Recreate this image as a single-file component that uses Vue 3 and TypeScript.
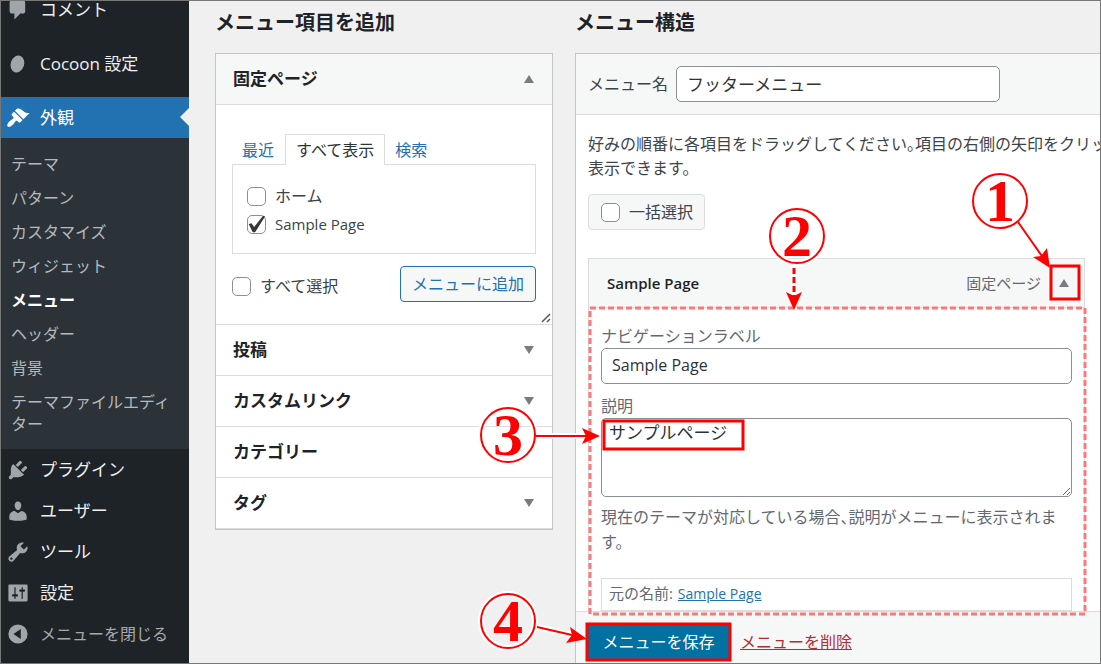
<script setup lang="ts">
import { ref } from 'vue'

interface MenuIcon {
  label: string
  path: string
}

const topItem: MenuIcon = {
  label: 'コメント',
  path: 'M5 2h9q.82 0 1.41.59T16 4v7q0 .82-.59 1.41T14 13h-2l-5 5v-5H5q-.82 0-1.41-.59T3 11V4q0-.82.59-1.41T5 2z',
}

const appearancePath =
  'M14.48 11.06L7.41 3.99l1.5-1.5c.5-.56 2.3-.47 3.51.32 1.21.8 1.43 1.28 2.91 2.1 1.18.64 2.45 1.26 4.45.85zm-.71.71L6.7 4.7 4.93 6.47c-.39.39-.39 1.02 0 1.41l1.06 1.06c.39.39.39 1.03 0 1.42-.6.6-1.43 1.11-2.21 1.69-.35.26-.7.53-1.01.84C1.43 14.23.4 16.08 1.4 17.07c.99 1 2.84-.03 4.18-1.36.31-.31.58-.66.85-1.02.57-.78 1.08-1.61 1.69-2.21.39-.39 1.02-.39 1.41 0l1.06 1.06c.39.39 1.02.39 1.41 0z'

const submenu: string[] = [
  'テーマ',
  'パターン',
  'カスタマイズ',
  'ウィジェット',
  'メニュー',
  'ヘッダー',
  '背景',
  'テーマファイルエディター',
]
const currentSub = 'メニュー'

const lowerItems: MenuIcon[] = [
  {
    label: 'プラグイン',
    path: 'M13.11 4.36L9.87 7.6 8 5.73l3.24-3.24c.35-.34 1.05-.2 1.56.32.52.51.66 1.21.31 1.55zm-8 1.77l.91-1.12 9.01 9.01-1.19.84c-.71.71-2.63 1.16-3.82 1.16H6.14L4.9 17.26c-.59.59-1.54.59-2.12 0-.59-.58-.59-1.53 0-2.12l1.24-1.24v-3.88c0-1.13.4-3.19 1.09-3.89zm7.26 3.97l3.24-3.24c.34-.35 1.04-.21 1.55.31.52.51.66 1.21.31 1.55l-3.24 3.25z',
  },
  {
    label: 'ユーザー',
    path: 'M10 9.25c-2.27 0-2.73-3.44-2.73-3.44C7 4.02 7.82 2 9.97 2c2.16 0 2.98 2.02 2.71 3.81 0 0-.41 3.44-2.68 3.44zm0 2.57L12.72 10c2.39 0 4.52 2.33 4.52 4.53v2.49s-3.65 1.13-7.24 1.13c-3.65 0-7.24-1.13-7.24-1.13v-2.49c0-2.25 1.94-4.48 4.47-4.48z',
  },
  {
    label: 'ツール',
    path: 'M16.68 9.77c-1.34 1.34-3.3 1.67-4.95.99l-5.41 6.52c-.99.99-2.59.99-3.58 0s-.99-2.59 0-3.57l6.52-5.42c-.68-1.65-.35-3.61.99-4.95 1.28-1.28 3.12-1.62 4.72-1.06l-2.89 2.89 2.82 2.82 2.86-2.87c.53 1.58.18 3.39-1.08 4.65zM3.81 16.21c.4.39 1.04.39 1.43 0 .4-.4.4-1.04 0-1.43-.39-.4-1.03-.4-1.43 0-.39.39-.39 1.03 0 1.43z',
  },
  {
    label: '設定',
    path: 'M18 16V4c0-.55-.45-1-1-1H3c-.55 0-1 .45-1 1v12c0 .55.45 1 1 1h14c.55 0 1-.45 1-1zM8 11h1c.55 0 1 .45 1 1s-.45 1-1 1H8v1.5c0 .28-.22.5-.5.5s-.5-.22-.5-.5V13H6c-.55 0-1-.45-1-1s.45-1 1-1h1V5.5c0-.28.22-.5.5-.5s.5.22.5.5V11zm5-2h-1c-.55 0-1-.45-1-1s.45-1 1-1h1V5.5c0-.28.22-.5.5-.5s.5.22.5.5V7h1c.55 0 1 .45 1 1s-.45 1-1 1h-1v5.5c0 .28-.22.5-.5.5s-.5-.22-.5-.5V9z',
  },
]

const sections = [
  { label: '投稿', caret: true },
  { label: 'カスタムリンク', caret: true },
  { label: 'カテゴリー', caret: false },
  { label: 'タグ', caret: true },
]

const homeChecked = ref(false)
const sampleChecked = ref(true)
const allChecked = ref(false)
const bulkChecked = ref(false)
const menuName = ref('フッターメニュー')
const navLabel = ref('Sample Page')
const description = ref('サンプルページ')

const badges = [
  { n: '1', x: 1000, y: 201 },
  { n: '2', x: 797, y: 236 },
  { n: '3', x: 508, y: 435 },
  { n: '4', x: 508, y: 621 },
]
</script>

<template>
  <div class="screen">
    <nav class="sidebar">
      <ul class="menu">
        <li>
          <a href="#" class="row">
            <svg class="icon" viewBox="0 0 20 20"><path :d="topItem.path" /></svg>
            <span>{{ topItem.label }}</span>
          </a>
        </li>
        <li class="group">
          <a href="#" class="row">
            <svg class="icon" viewBox="0 0 20 20">
              <ellipse cx="9.5" cy="10" rx="5.6" ry="7.2" transform="rotate(18 9.5 10)" />
            </svg>
            <span>Cocoon 設定</span>
          </a>
        </li>
        <li class="group-next">
          <a href="#" class="row active">
            <svg class="icon" viewBox="0 0 20 20"><path :d="appearancePath" /></svg>
            <span>外観</span>
          </a>
          <ul class="submenu">
            <li v-for="s in submenu" :key="s">
              <a href="#" :class="{ current: s === currentSub }">{{ s }}</a>
            </li>
          </ul>
        </li>
        <li v-for="m in lowerItems" :key="m.label">
          <a href="#" class="row">
            <svg class="icon" viewBox="0 0 20 20"><path fill-rule="evenodd" :d="m.path" /></svg>
            <span>{{ m.label }}</span>
          </a>
        </li>
        <li>
          <button type="button" class="row collapse">
            <svg class="icon" viewBox="0 0 20 20">
              <path fill-rule="evenodd" d="M10 2a8 8 0 1 0 0 16a8 8 0 0 0 0-16zM12.3 5.8v8.4L6.2 10z" />
            </svg>
            <span>メニューを閉じる</span>
          </button>
        </li>
      </ul>
    </nav>

    <main class="main">
      <section class="add">
        <h2>メニュー項目を追加</h2>
        <div class="accordion">
          <button type="button" class="acc-head open">
            <span>固定ページ</span>
            <svg class="caret" viewBox="0 0 10 8"><path d="M5 0l5 8H0z" /></svg>
          </button>
          <div class="acc-body">
            <div class="tabs">
              <a href="#" class="tab">最近</a>
              <a href="#" class="tab selected">すべて表示</a>
              <a href="#" class="tab">検索</a>
            </div>
            <div class="tab-panel">
              <label class="check">
                <input v-model="homeChecked" type="checkbox" />
                <span>ホーム</span>
              </label>
              <label class="check">
                <input v-model="sampleChecked" type="checkbox" />
                <span class="latin">Sample Page</span>
              </label>
            </div>
            <div class="controls">
              <label class="check">
                <input v-model="allChecked" type="checkbox" />
                <span>すべて選択</span>
              </label>
              <button type="button" class="btn-outline">メニューに追加</button>
            </div>
            <svg class="grip" viewBox="0 0 10 10"><path d="M1 9l8-8M6 9l3-3" /></svg>
          </div>
          <button v-for="s in sections" :key="s.label" type="button" class="acc-head">
            <span>{{ s.label }}</span>
            <svg v-if="s.caret" class="caret" viewBox="0 0 10 8"><path d="M0 0h10L5 8z" /></svg>
          </button>
        </div>
      </section>

      <section class="structure">
        <h2>メニュー構造</h2>
        <div class="panel">
          <header class="panel-head">
            <label for="menu-name">メニュー名</label>
            <input id="menu-name" v-model="menuName" class="field name" type="text" />
          </header>
          <div class="panel-body">
            <p class="intro">好みの順番に各項目をドラッグしてください。項目の右側の矢印をクリッ<br />表示できます。</p>
            <label class="bulk">
              <input v-model="bulkChecked" type="checkbox" />
              <span>一括選択</span>
            </label>
            <div class="item-bar">
              <strong>Sample Page</strong>
              <span class="type">固定ページ</span>
              <button type="button" class="toggle" aria-label="Sample Page">
                <svg class="caret" viewBox="0 0 10 8"><path d="M5 0l5 8H0z" /></svg>
              </button>
            </div>
            <div class="item-settings">
              <label for="nav-label">ナビゲーションラベル</label>
              <input id="nav-label" v-model="navLabel" class="field" type="text" />
              <label for="description" class="second">説明</label>
              <textarea id="description" v-model="description" class="area"></textarea>
              <p class="note">現在のテーマが対応している場合、説明がメニューに表示されます。</p>
              <p class="origin">元の名前: <a href="#">Sample Page</a></p>
            </div>
          </div>
          <footer class="panel-foot">
            <button type="button" class="save">メニューを保存</button>
            <a href="#" class="delete">メニューを削除</a>
          </footer>
        </div>
      </section>
    </main>

    <svg class="notes" width="1101" height="664" viewBox="0 0 1101 664">
      <g fill="none" class="halo">
        <circle v-for="b in badges" :key="b.n" :cx="b.x" :cy="b.y" r="27" />
        <path d="M1018 222L1044 259M794 266V298M536 436H586M537 627L572 635" />
      </g>
      <rect class="dashes" x="590" y="308" width="495" height="306" />
      <g class="frames">
        <rect x="1051" y="266" width="28" height="33" />
        <rect x="604" y="421" width="139" height="28" />
        <rect x="587" y="624" width="143" height="36" />
      </g>
      <g class="lines">
        <path d="M1018 222L1044 259M536 436H586M537 627L572 635" />
        <path class="thick" d="M794 268V296" stroke-dasharray="6 3" />
      </g>
      <g class="heads">
        <path d="M1050 268L1033 257L1041 256L1047 248Z" />
        <path d="M794 310L786 292L794 296L802 292Z" />
        <path d="M600 436L582 444L586 436L582 428Z" />
        <path d="M587 639L566 643L572 635L570 627Z" />
      </g>
      <circle v-for="b in badges" :key="'c' + b.n" class="ring" :cx="b.x" :cy="b.y" r="27" />
      <text v-for="b in badges" :key="'t' + b.n" class="digit" :x="b.x" :y="b.y + 20">{{ b.n }}</text>
    </svg>
  </div>
</template>

<style>
body {
  margin: 0;
  background: #f0f0f0;
}
</style>

<style scoped>
* {
  box-sizing: border-box;
}

.screen {
  position: relative;
  display: flex;
  height: 100vh;
  overflow: hidden;
  border: 1px solid #777;
  background: #f0f0f0;
  color: #3c434a;
  font-family: 'Open Sans', 'Noto Sans CJK JP', sans-serif;
  font-size: 16px;
  line-height: 24px;
}

button,
input,
textarea {
  font: inherit;
}

ul {
  list-style: none;
  margin: 0;
  padding: 0;
}

/* Sidebar */
.sidebar {
  flex: none;
  width: 188px;
  overflow: hidden;
  background: #1d2327;
}

.menu {
  margin-top: -12px;
}

.group {
  margin-top: 13px;
}

.group-next {
  margin-top: 13px;
}

.row {
  display: flex;
  align-items: center;
  gap: 10px;
  width: 100%;
  height: 41px;
  padding: 0 5px;
  color: #f0f0f1;
  font-size: 17px;
  text-decoration: none;
  white-space: nowrap;
}

.icon {
  flex: none;
  width: 24px;
  height: 24px;
  fill: #a0a5aa;
}

.active {
  position: relative;
  background: #2271b1;
  color: #fff;
}

.active .icon {
  fill: #fff;
}

.active::after {
  content: '';
  position: absolute;
  right: 0;
  top: 11px;
  border: 9px solid transparent;
  border-left: 0;
  border-right-color: #f0f0f0;
}

.collapse {
  border: 0;
  background: none;
  color: #a7aaad;
  font-size: 16px;
}

.submenu {
  padding: 9px 0 8px;
  background: #2c3338;
}

.submenu a {
  display: block;
  padding: 6px 8px 6px 10px;
  color: #b4b9be;
  line-height: 22px;
  text-decoration: none;
}

.submenu .current {
  color: #fff;
  font-weight: 700;
}

/* Main area */
.main {
  display: flex;
  flex: 1;
  gap: 22px;
  min-width: 0;
  padding-left: 26px;
}

h2 {
  margin: 0;
  padding: 8px 0 16px;
  color: #1d2327;
  font-size: 20px;
  line-height: 28px;
}

.add {
  flex: none;
  width: 338px;
}

.accordion {
  border: 1px solid #c3c4c7;
  background: #fff;
}

.acc-head {
  display: flex;
  align-items: center;
  justify-content: space-between;
  width: 100%;
  height: 51px;
  padding: 0 18px 0 17px;
  border: 0;
  border-bottom: 1px solid #dcdcde;
  background: #fff;
  color: #1d2327;
  font-size: 17px;
  font-weight: 700;
}

.acc-head.open {
  background: #f6f7f7;
}

.caret {
  width: 10px;
  height: 8px;
  fill: #787c82;
}

.acc-body {
  position: relative;
  padding: 29px 16px 22px;
  border-bottom: 1px solid #dcdcde;
}

.tabs {
  display: flex;
}

.tab {
  padding: 3px 10px 0 9px;
  border: 1px solid transparent;
  border-bottom: 0;
  height: 30px;
  color: #2271b1;
  line-height: 24px;
  text-decoration: none;
}

.tab.selected {
  height: 31px;
  margin-bottom: -1px;
  padding-left: 10px;
  border-color: #dcdcde;
  background: #fff;
  color: #2c3338;
  z-index: 1;
}

.tab-panel {
  display: grid;
  gap: 4px;
  height: 90px;
  padding: 19px 14px;
  border: 1px solid #dcdcde;
}

.check {
  display: flex;
  align-items: center;
  gap: 9px;
}

.latin {
  font-size: 15px;
}

input[type='checkbox'] {
  appearance: none;
  position: relative;
  flex: none;
  width: 19px;
  height: 19px;
  margin: 0;
  border: 1px solid #8c8f94;
  border-radius: 5px;
  background: #fff;
}

input[type='checkbox']:checked::before {
  content: '';
  position: absolute;
  inset: 0;
  background: #32373c;
  clip-path: polygon(4% 50%, 20% 46%, 36% 68%, 90% 0%, 100% 6%, 42% 98%, 28% 98%);
}

.controls {
  display: flex;
  justify-content: space-between;
  margin-top: 12px;
}

.controls .check {
  padding-top: 4px;
}

.btn-outline {
  height: 36px;
  padding: 0 11px;
  border: 1px solid #2271b1;
  border-radius: 4px;
  background: #f6f7f7;
  color: #2271b1;
}

.grip {
  position: absolute;
  right: 1px;
  bottom: 1px;
  width: 10px;
  height: 10px;
  fill: none;
  stroke: #50575e;
  stroke-width: 1.5;
}

/* Menu structure */
.structure {
  display: flex;
  flex: 1;
  flex-direction: column;
  min-width: 0;
}

.panel {
  display: flex;
  flex: 1;
  flex-direction: column;
  border: solid #c3c4c7;
  border-width: 1px 0 0 1px;
  background: #fff;
}

.panel-head {
  display: flex;
  align-items: center;
  gap: 8px;
  padding: 12px;
  border-bottom: 1px solid #dcdcde;
  background: #f6f7f7;
}

.field {
  display: block;
  width: 100%;
  height: 36px;
  padding: 0 10px 2px;
  border: 1px solid #8c8f94;
  border-radius: 5px;
  background: #fff;
  color: #2c3338;
}

.name {
  width: 324px;
  font-size: 17px;
}

.panel-body {
  padding: 17px 15px 0 12px;
}

.intro {
  margin: 0 -15px 0 0;
  font-feature-settings: 'halt';
  white-space: nowrap;
}

.bulk {
  display: inline-flex;
  align-items: center;
  gap: 9px;
  height: 36px;
  margin-top: 14px;
  padding: 0 11px 0 12px;
  border: 1px solid #dcdcde;
  border-radius: 4px;
  background: #f6f7f7;
  vertical-align: top;
}

.item-bar {
  display: flex;
  align-items: center;
  height: 50px;
  margin-top: 28px;
  padding: 0 5px 0 18px;
  border: 1px solid #dcdcde;
  background: #f6f7f7;
}

.item-bar strong {
  color: #1d2327;
  font-size: 15px;
  font-weight: 600;
}

.type {
  margin-left: auto;
  color: #646970;
  font-size: 15px;
}

.toggle {
  display: grid;
  place-items: center;
  width: 30px;
  height: 34px;
  margin-left: 8px;
  padding: 0;
  border: 0;
  background: none;
}

.item-settings {
  padding: 16px 12px 0;
  border: solid #dcdcde;
  border-width: 0 1px;
  color: #646970;
}

.item-settings label {
  display: block;
}

.item-settings .second {
  margin-top: 10px;
}

.area {
  display: block;
  width: 100%;
  height: 79px;
  padding: 2px 7px;
  border: 1px solid #8c8f94;
  border-radius: 5px;
  background: #fff;
  color: #2c3338;
  font-size: 17px;
}

.note {
  margin: 8px 0 0;
  font-feature-settings: 'halt';
  line-height: 25px;
}

.origin {
  margin: 23px 0 0;
  padding: 2px 7px 4px;
  border: 1px solid #dcdcde;
  font-size: 15px;
}

.origin a {
  margin-left: 1px;
  color: #2271b1;
  font-size: 14px;
}

.panel-foot {
  display: flex;
  flex: 1;
  align-items: flex-start;
  gap: 11px;
  padding: 13px 12px 0;
  border-top: 1px solid #dcdcde;
  background: #f6f7f7;
}

.save {
  height: 34px;
  width: 141px;
  padding: 0;
  border: 0;
  background: #0071a1;
  color: #fff;
}

.delete {
  color: #b32d2e;
  line-height: 34px;
}

/* Numbered call-outs drawn over the page */
.notes {
  position: absolute;
  left: -1px;
  top: -1px;
  pointer-events: none;
}

.halo {
  stroke: #fff;
  stroke-width: 6;
}

.dashes {
  fill: none;
  stroke: #f77;
  stroke-width: 3;
  stroke-dasharray: 6 3;
}

.frames {
  fill: none;
  stroke: #f00;
  stroke-width: 3;
}

.lines {
  fill: none;
  stroke: #f00;
  stroke-width: 2;
}

.lines .thick {
  stroke-width: 3;
}

.heads {
  fill: #f00;
}

.ring {
  fill: none;
  stroke: #f00;
  stroke-width: 2;
}

.digit {
  fill: #f00;
  font-family: 'Liberation Serif', serif;
  font-size: 60px;
  font-weight: 700;
  text-anchor: middle;
}
</style>
